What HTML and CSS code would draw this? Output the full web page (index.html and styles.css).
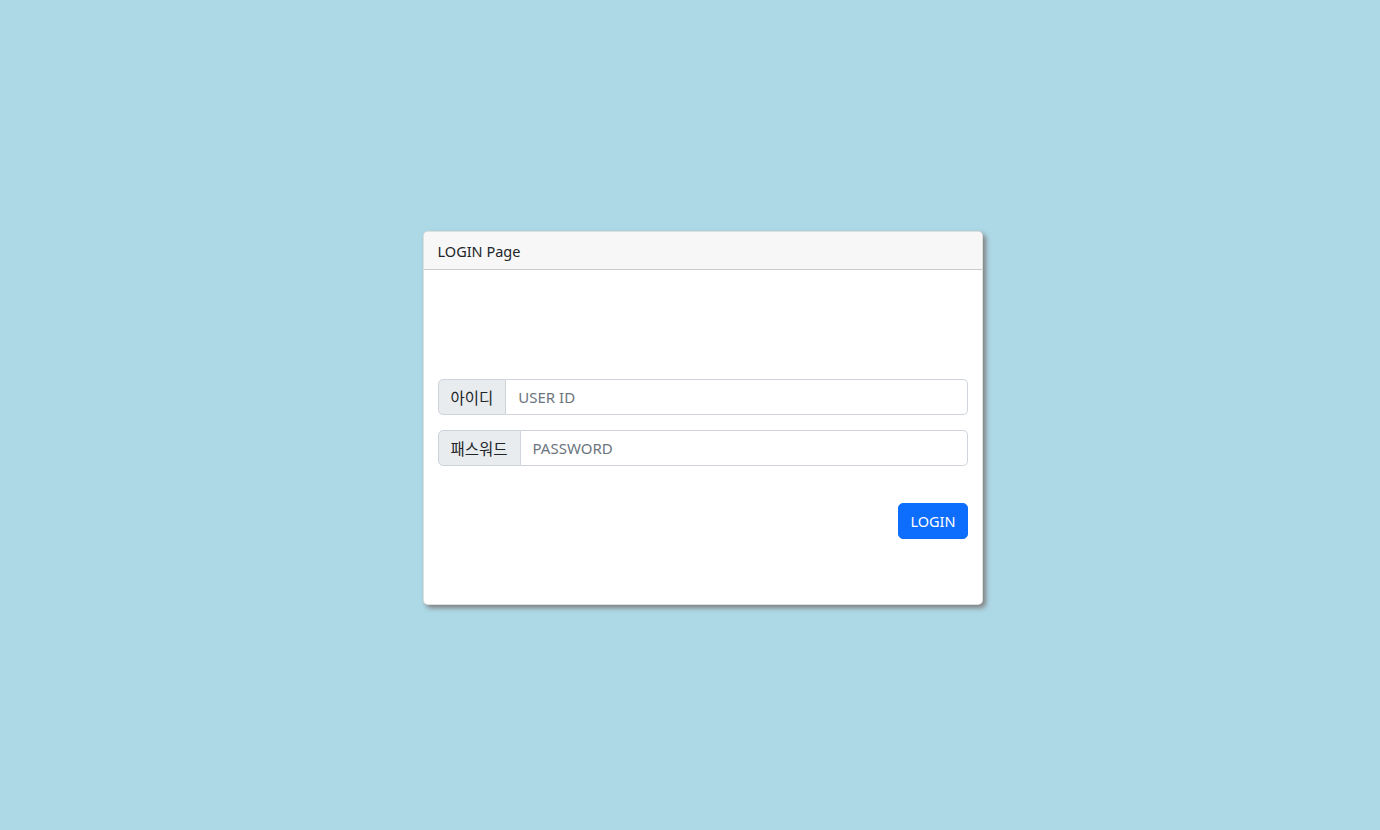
FILE: index.html
```html
<!DOCTYPE html>
<html lang="ko">
  <head>
    <meta charset="UTF-8" />
    <meta name="viewport" content="width=device-width, initial-scale=1.0" />
    <title>LOGIN Page</title>
    <link rel="stylesheet" href="styles.css">
  </head>
  <body>
    <div class="wrap">
      <div class="card">
        <div class="card-header">LOGIN Page</div>
        <div class="card-body">
          <form class="login-form" onsubmit="return false;">
            <div class="input-group">
              <span class="input-group-text">아이디</span>
              <input type="text" class="form-control" placeholder="USER ID" />
            </div>
            <div class="input-group">
              <span class="input-group-text">패스워드</span>
              <input type="password" class="form-control" placeholder="PASSWORD" />
            </div>
            <div class="actions">
              <button type="submit" class="btn-primary">LOGIN</button>
            </div>
          </form>
        </div>
      </div>
    </div>
  </body>
</html>
```

FILE: styles.css
```css
* {
  box-sizing: border-box;
}
html,
body {
  height: 100%;
}
body {
  margin: 0;
  background: lightblue;
  font-family: "Noto Sans", "Noto Sans CJK KR", sans-serif;
  font-size: 14.5px;
  color: #212529;
}
.wrap {
  height: 100%;
  display: flex;
  align-items: center;
  justify-content: center;
}
.card {
  width: 560px;
  margin: 6px 0 0 25px;
  background: #fff;
  border: 1px solid rgba(0, 0, 0, 0.125);
  border-radius: 5px;
  box-shadow: 3px 3px 5px gray;
}
.card-header {
  height: 38px;
  padding: 0 14px;
  display: flex;
  align-items: center;
  background: #f7f7f7;
  border-bottom: 1px solid rgba(0, 0, 0, 0.175);
  border-radius: 5px 5px 0 0;
}
.card-body {
  padding: 109px 14px 65px;
}
.input-group {
  display: flex;
  height: 36px;
  margin-bottom: 15px;
}
.input-group-text {
  display: flex;
  align-items: center;
  padding: 0 12px;
  font-size: 15.5px;
  background: #e9ecef;
  border: 1px solid #ced4da;
  border-radius: 5px 0 0 5px;
  white-space: nowrap;
}
.form-control {
  flex: 1;
  min-width: 0;
  padding: 0 12px;
  font: inherit;
  font-size: 15px;
  color: #212529;
  border: 1px solid #ced4da;
  border-left: none;
  border-radius: 0 5px 5px 0;
  outline: none;
}
.form-control::placeholder {
  color: #6c757d;
}
.actions {
  display: flex;
  justify-content: flex-end;
  padding-top: 22px;
}
.btn-primary {
  height: 36px;
  padding: 0 11px;
  font: inherit;
  color: #fff;
  background: #0d6efd;
  border: 1px solid #0d6efd;
  border-radius: 5px;
  cursor: pointer;
}
```
